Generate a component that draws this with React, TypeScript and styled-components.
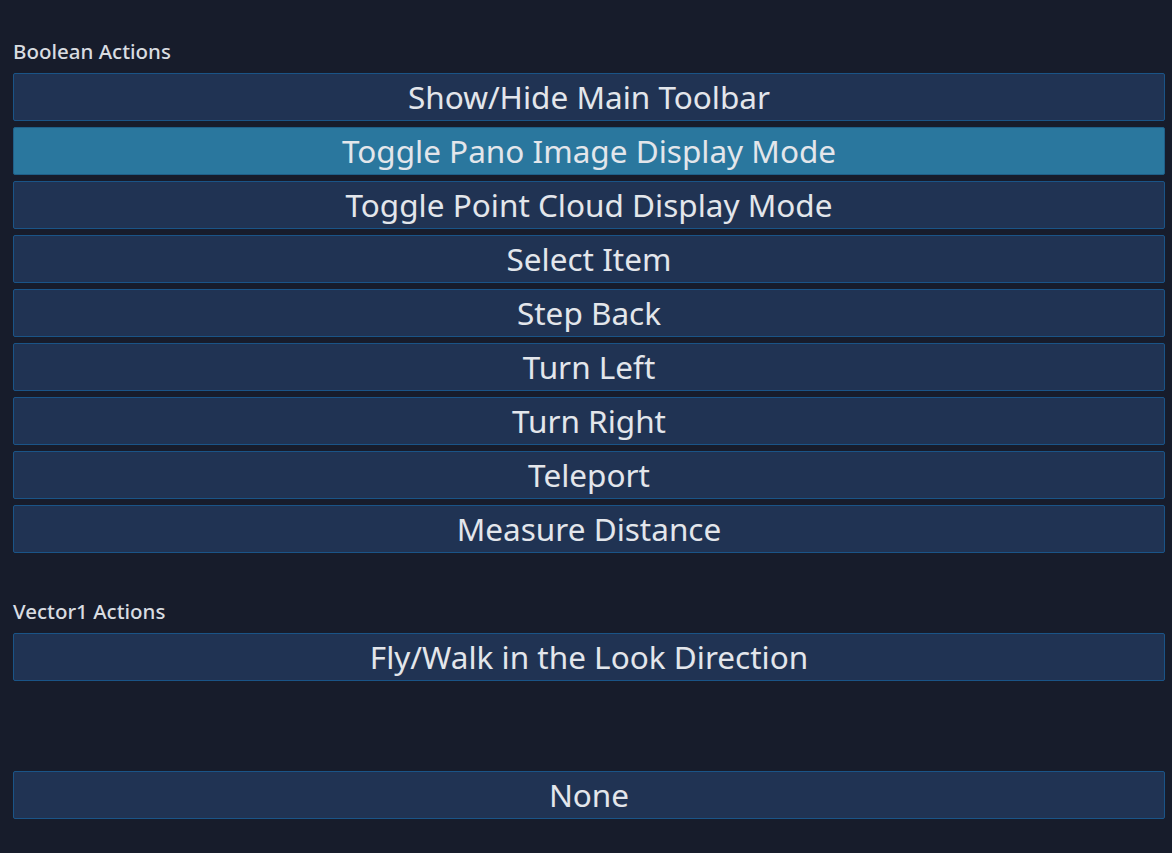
import styled, { createGlobalStyle } from "styled-components";

//types
type Section = {
  title: string;
  actions: Array<string>;
};

//data
const sections: Array<Section> = [
  {
    title: "Boolean Actions",
    actions: [
      "Show/Hide Main Toolbar",
      "Toggle Pano Image Display Mode",
      "Toggle Point Cloud Display Mode",
      "Select Item",
      "Step Back",
      "Turn Left",
      "Turn Right",
      "Teleport",
      "Measure Distance",
    ],
  },
  {
    title: "Vector1 Actions",
    actions: ["Fly/Walk in the Look Direction"],
  },
];
const SELECTED = "Toggle Pano Image Display Mode";

//styles
const GlobalStyle = createGlobalStyle`
  html, body {
    margin: 0;
    padding: 0;
    background: #171c2b;
    font-family: "Noto Sans", "Open Sans", sans-serif;
  }
`;
const Page = styled.div`
  min-height: 853px;
  box-sizing: border-box;
  padding: 40px 7px 0 13px;
  display: flex;
  flex-direction: column;
`;
const StyledSection = styled.section`
  display: flex;
  flex-direction: column;
  &:not(:first-child) {
    margin-top: 47px;
  }
`;
const Title = styled.h2`
  margin: 0 0 11px;
  font-size: 20.5px;
  line-height: 22px;
  font-weight: 500;
  color: #d9dce1;
`;
const List = styled.div`
  display: flex;
  flex-direction: column;
  gap: 6px;
`;
const ActionButton = styled.button<{ $selected?: boolean }>`
  height: 48px;
  width: 100%;
  box-sizing: border-box;
  border: 1px solid ${(p) => (p.$selected ? "#1f5f88" : "#1a5487")};
  border-radius: 2px;
  background: ${(p) => (p.$selected ? "#2a779e" : "#203353")};
  color: #e3e6eb;
  font-family: inherit;
  font-size: 31.5px;
  line-height: 1;
  padding: 0;
  cursor: pointer;
`;
const NoneRow = styled.div`
  margin-top: 90px;
`;

export default function App() {
  return (
    <>
      <GlobalStyle />
      <Page>
        {sections.map((s) => (
          <StyledSection key={s.title}>
            <Title>{s.title}</Title>
            <List>
              {s.actions.map((a) => (
                <ActionButton key={a} $selected={a === SELECTED}>
                  {a}
                </ActionButton>
              ))}
            </List>
          </StyledSection>
        ))}
        <NoneRow>
          <ActionButton>None</ActionButton>
        </NoneRow>
      </Page>
    </>
  );
}
